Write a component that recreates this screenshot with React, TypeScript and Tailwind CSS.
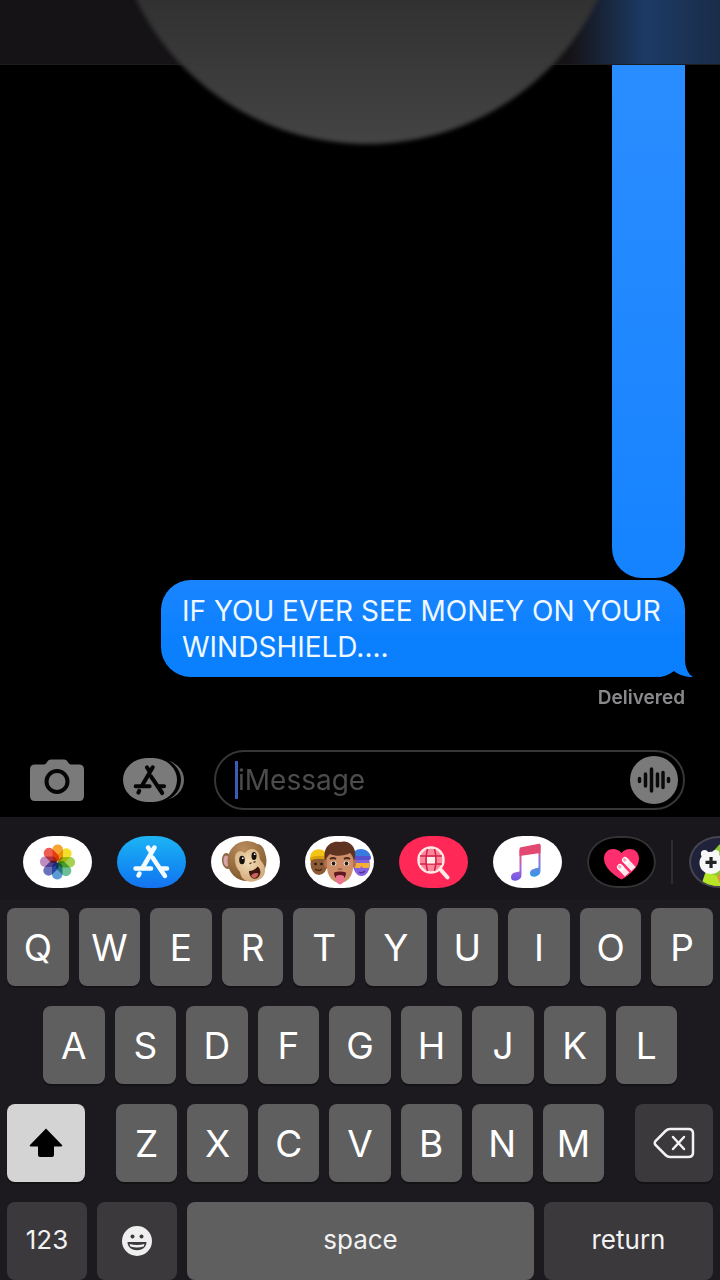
import type { ReactNode } from 'react';

interface DrawerApp {
  name: string;
  className: string;
  icon: ReactNode;
}

const petals = [
  { angle: 0, color: '#f79a1c' },
  { angle: 45, color: '#f2dc14' },
  { angle: 90, color: '#9ccb3b' },
  { angle: 135, color: '#5cb88a' },
  { angle: 180, color: '#4a8fd0' },
  { angle: 225, color: '#5b62b5' },
  { angle: 270, color: '#b680ba' },
  { angle: 315, color: '#ee4a3e' },
];

function PhotosIcon() {
  return (
    <svg viewBox="0 0 69 52" className="h-full w-full" aria-hidden="true">
      {petals.map((petal) => (
        <rect
          key={petal.angle}
          x="29.5"
          y="8.5"
          width="10.5"
          height="17"
          rx="5"
          fill={petal.color}
          className="mix-blend-multiply"
          opacity="0.9"
          transform={`rotate(${petal.angle} 34.5 26)`}
        />
      ))}
    </svg>
  );
}

function StoreGlyph({ color }: { color: string }) {
  return (
    <g fill="none" stroke={color} strokeWidth="4.500" strokeLinecap="round">
      <path d="M31 11.500 L34 16" />
      <path d="M37.500 11.500 L25.500 32" />
      <path d="M22.500 37.500 L21.500 39.500" />
      <path d="M35.500 21.500 L48 40" />
      <path d="M18.500 32.500 H34 M44.500 32.500 H50" />
    </g>
  );
}

function StoreIcon() {
  return (
    <svg viewBox="0 0 69 52" className="h-full w-full" aria-hidden="true">
      <StoreGlyph color="#f4fbff" />
    </svg>
  );
}

function MonkeyIcon() {
  return (
    <svg viewBox="0 0 69 52" className="h-full w-full" aria-hidden="true">
      <defs>
        <radialGradient id="fur" cx="0.4" cy="0.2" r="0.9">
          <stop offset="0" stopColor="#b98c5c" />
          <stop offset="1" stopColor="#7c5429" />
        </radialGradient>
        <radialGradient id="muzzle" cx="0.45" cy="0.4" r="0.65">
          <stop offset="0" stopColor="#f2dcb6" />
          <stop offset="1" stopColor="#d1a878" />
        </radialGradient>
      </defs>
      <ellipse cx="16" cy="25" rx="5" ry="8" fill="#8c6846" transform="rotate(-8 16 25)" />
      <ellipse cx="15.500" cy="25" rx="3" ry="5.500" fill="#d9a3a8" transform="rotate(-8 15.500 25)" />
      <ellipse cx="49" cy="16" rx="4.500" ry="8" fill="#8c6846" transform="rotate(-20 49 16)" />
      <ellipse cx="50" cy="16" rx="2" ry="5" fill="#c7b0b4" transform="rotate(-20 50 16)" />
      <ellipse cx="36" cy="25" rx="19.500" ry="20" fill="url(#fur)" />
      <path
        d="M24 24c-1-8 5-11 10-7 4-6 12-5 14 1 1 4 0 5 3 8 5 6 4 15-4 18-8 4-17 1-18-8-3-3-5-7-5-12z"
        fill="url(#muzzle)"
      />
      <ellipse cx="31" cy="24" rx="2.800" ry="4.200" fill="#17100c" />
      <ellipse cx="43" cy="20" rx="2.500" ry="4" fill="#17100c" />
      <circle cx="31.800" cy="22.200" r="0.900" fill="#fff" />
      <circle cx="43.700" cy="18.200" r="0.900" fill="#fff" />
      <path d="M39 27.500l1-.4M43 26.200l1-.4" stroke="#67452e" strokeWidth="1.500" strokeLinecap="round" />
      <path d="M38 35c4 0 7-2 8.500-4.500 3.500 2 4 8 .5 11-4 3-9 0-9-6.500z" fill="#3d150f" />
      <path d="M40 39.500c2-2.500 5-3 7.500-2-.5 4-5 7-7.500 2z" fill="#c9605c" />
    </svg>
  );
}

function MemojiIcon() {
  return (
    <svg viewBox="0 0 69 52" className="h-full w-full" aria-hidden="true">
      <ellipse cx="14" cy="28" rx="8.500" ry="11" fill="#8c5a35" />
      <path d="M5 23c0-13 17-13 18 0l-9-2z" fill="#f4c414" />
      <path d="M5 22c5-3 13-3 18 0v3c-5-3-13-3-18 0z" fill="#d99f0c" />
      <circle cx="10.500" cy="28" r="1.300" fill="#21140d" />
      <circle cx="16.500" cy="28" r="1.300" fill="#21140d" />
      <path d="M10 33q4 3 7 0" stroke="#4b2615" strokeWidth="1.500" fill="none" />
      <ellipse cx="56.500" cy="28" rx="8.500" ry="12" fill="#8263dc" />
      <path d="M48 22c-2-12 17-12 18 0l-9-2z" fill="#387bdf" />
      <rect x="48" y="20" width="18" height="4" rx="2" fill="#5a50ce" />
      <path d="M49 27h16l-1 5h-6l-1.500-2-1.500 2h-5z" fill="#f2ae35" />
      <path d="M54 36q3 2 6-1" stroke="#51359c" strokeWidth="1.500" fill="none" />
      <ellipse cx="21.500" cy="27" rx="2.500" ry="4.500" fill="#b3714f" />
      <ellipse cx="48.500" cy="27" rx="2.500" ry="4.500" fill="#b3714f" />
      <path d="M22 20c0-8 26-8 26 0v11c0 9-6 16-13 16s-13-7-13-16z" fill="#cf8d68" />
      <path d="M20 25C17 10 27 4 35 6c9-3 19 6 14 19-1-4-2-6-4-8-6 3-14 4-20 1-2 2-4 4-5 7z" fill="#5f3322" />
      <path d="M25 23q3-2 6 0M39 23q3-2 6 0" stroke="#4a291d" strokeWidth="2" fill="none" />
      <ellipse cx="28.500" cy="27.500" rx="2.800" ry="2.200" fill="#fff" />
      <ellipse cx="41.500" cy="27.500" rx="2.800" ry="2.200" fill="#fff" />
      <circle cx="28.500" cy="27.500" r="1.900" fill="#2b1a12" />
      <circle cx="41.500" cy="27.500" r="1.900" fill="#2b1a12" />
      <path d="M33 32.500q2 1.500 4 0" stroke="#9b5b40" strokeWidth="1.500" fill="none" />
      <path d="M29 36.500q6-2 12 0c0 5-3 7-6 7s-6-2-6-7z" fill="#5f1820" />
      <path d="M31 40q4-2 8 0v5q-4 7-8 0z" fill="#ea7593" />
    </svg>
  );
}

function SearchGlobeIcon() {
  return (
    <svg viewBox="0 0 69 52" className="h-full w-full" aria-hidden="true">
      <g fill="none" stroke="#ffe9e6">
        <circle cx="32" cy="24" r="12.500" fill="#ff8599" strokeWidth="2.500" />
        <path d="M41.500 33.500l7 8" strokeWidth="4" strokeLinecap="round" />
      </g>
      <g fill="none" stroke="#d0224a" strokeWidth="1.500">
        <path d="M21 20h22M21 28h22" />
        <path d="M28.500 13q-3 11 0 22M35.500 13q3 11 0 22" />
      </g>
      <path d="M28 21h8v6.500h-8z" fill="#fff0ee" />
    </svg>
  );
}

function MusicIcon() {
  return (
    <svg viewBox="0 0 69 52" className="h-full w-full" aria-hidden="true">
      <defs>
        <linearGradient id="stemLeft" x1="0" y1="0" x2="0" y2="1">
          <stop offset="0" stopColor="#f04a6c" />
          <stop offset="0.6" stopColor="#a66ad8" />
          <stop offset="1" stopColor="#6f55e6" />
        </linearGradient>
        <linearGradient id="stemRight" x1="0" y1="0" x2="0" y2="1">
          <stop offset="0" stopColor="#e5476e" />
          <stop offset="0.5" stopColor="#8f74d8" />
          <stop offset="1" stopColor="#2f9bea" />
        </linearGradient>
      </defs>
      <path d="M26.500 14h2V37q0 3-.5 4.500c-2 4-10 4.500-10 0C18 36 23 36.500 26.500 35.500z" fill="url(#stemLeft)" />
      <path d="M45.500 9h2V33q0 3-.5 4.500c-2 4-10 4.500-10 0 0-5 5-4.500 8.500-6z" fill="url(#stemRight)" />
      <path d="M26.500 13q0-1.500 1.500-1.700L46 7.700Q47.500 7.500 47.500 9v8L26.500 20z" fill="#e24870" />
    </svg>
  );
}

function DigitalTouchIcon() {
  return (
    <svg viewBox="0 0 69 52" className="h-full w-full" aria-hidden="true">
      <path
        d="M34.500 43.500C26 39 17 31 17 22.500 17 12 29 10 34.500 17 40 10 52 12 52 22.500 52 31 43 39 34.500 43.500z"
        fill="#ff2f6d"
      />
      <g fill="none" strokeLinecap="round">
        <path d="M38.500 24.500l8 8.500M33 31l7 7.500" stroke="#ffe6ea" strokeWidth="6" strokeLinecap="butt" />
        <path d="M38 24l1 1M33 31l1 1" stroke="#fff" strokeWidth="6" />
        <path d="M37.500 23.500l.5 .5M32.500 30.500l.5 .5" stroke="#f6a3b5" strokeWidth="3" />
      </g>
    </svg>
  );
}

function GameIcon() {
  return (
    <svg viewBox="0 0 69 52" className="h-full w-full" aria-hidden="true">
      <path d="M23 15L30 7h39v45H13z" fill="#8cc832" />
      <path d="M24 46l7-8 14-4v18H24z" fill="#e8923d" />
      <path d="M15 37l12 4 5 11H10z" fill="#b6e627" />
      <ellipse cx="21" cy="27" rx="12.500" ry="12" fill="#f7f7f7" />
      <circle cx="14" cy="17" r="4" fill="#f7f7f7" />
      <circle cx="26" cy="17" r="4" fill="#f7f7f7" />
      <path d="M21 20.500v12M15 26.500h12" stroke="#222" strokeWidth="3.500" />
    </svg>
  );
}

const drawerApps: DrawerApp[] = [
  { name: 'Photos', className: 'bg-white', icon: <PhotosIcon /> },
  { name: 'App Store', className: 'bg-linear-to-b from-[#1fb4f5] to-[#1672f0]', icon: <StoreIcon /> },
  { name: 'Animoji', className: 'bg-white', icon: <MonkeyIcon /> },
  { name: 'Memoji', className: 'bg-white', icon: <MemojiIcon /> },
  { name: 'Images', className: 'bg-[#ff2856]', icon: <SearchGlobeIcon /> },
  { name: 'Music', className: 'bg-white', icon: <MusicIcon /> },
  { name: 'Digital Touch', className: 'bg-black ring-2 ring-[#333235] ring-inset', icon: <DigitalTouchIcon /> },
];

const topRow = ['Q', 'W', 'E', 'R', 'T', 'Y', 'U', 'I', 'O', 'P'];
const middleRow = ['A', 'S', 'D', 'F', 'G', 'H', 'J', 'K', 'L'];
const bottomRow = ['Z', 'X', 'C', 'V', 'B', 'N', 'M'];

function LetterKey({ letter }: { letter: string }) {
  return (
    <button
      type="button"
      className="h-[78px] min-w-0 flex-1 rounded-lg bg-[#5f5f60] pt-0.5 text-[37px] text-white shadow-[0_2px_0_#131215]"
    >
      {letter}
    </button>
  );
}

function Composer() {
  return (
    <form className="flex items-center pr-[35px] pb-[7px] pl-[30px]">
      <button type="button" aria-label="Camera" className="mr-[39px] shrink-0">
        <svg viewBox="0 0 54 43" className="h-[43px] w-[54px]" aria-hidden="true">
          <path
            d="M5 5.500h9c3 0 3-5 7-5h13c4 0 4 5 7 5h8q5 0 5 5V37q0 5-5 5H5q-5 0-5-5V10.500q0-5 5-5z"
            fill="#7a7a7b"
          />
          <circle cx="27" cy="22.500" r="10.500" fill="none" stroke="#050505" strokeWidth="4" />
        </svg>
      </button>
      <button type="button" aria-label="Apps" className="mr-[29px] shrink-0">
        <svg viewBox="0 0 62 44" className="h-11 w-[62px]" aria-hidden="true">
          <rect x="7" y="2" width="54" height="40" rx="22" ry="20" fill="#6c6c6d" />
          <rect x="3" y="0" width="55" height="44" rx="24" ry="22" fill="#000" />
          <rect x="0" y="0" width="54" height="44" rx="24" ry="22" fill="#7a7a7b" />
          <g transform="translate(-4 -1) scale(0.9)">
            <StoreGlyph color="#050505" />
          </g>
        </svg>
      </button>
      <div className="relative flex h-[60px] min-w-0 flex-1 items-center rounded-full border-2 border-[#363637] pr-[5px] pl-[22px]">
        <span className="absolute left-[19px] h-[38px] w-[3px] bg-[#3c5bb8]" />
        <input
          type="text"
          aria-label="Message"
          placeholder="iMessage"
          className="h-10 min-w-0 flex-1 bg-transparent text-[28px] text-white outline-none placeholder:text-[#4c4c4e]"
        />
        <button type="button" aria-label="Record audio" className="shrink-0">
          <svg viewBox="0 0 48 48" className="size-12" aria-hidden="true">
            <circle cx="24" cy="24" r="24" fill="#7a7a7b" />
            <path
              d="M9.500 22.500v3M15.500 18v12M21.500 13v22M27.500 18v12M33 16.500v15M38.500 22.500v3"
              stroke="#0a0a0a"
              strokeWidth="3.500"
              strokeLinecap="round"
            />
          </svg>
        </button>
      </div>
    </form>
  );
}

function AppDrawer() {
  return (
    <nav
      aria-label="iMessage apps"
      className="flex items-center gap-[25px] overflow-hidden bg-[#19171b] pt-[19px] pb-3 pl-[23px]"
    >
      {drawerApps.map((app) => (
        <button
          key={app.name}
          type="button"
          aria-label={app.name}
          className={`h-[52px] w-[69px] shrink-0 overflow-hidden rounded-[30px/26px] ${app.className}`}
        >
          {app.icon}
        </button>
      ))}
      <div className="-ml-2.5 flex shrink-0 items-center gap-4">
        <span className="h-11 w-0.5 bg-[#2e2c30]" />
        <button
          type="button"
          aria-label="Games"
          className="h-[52px] w-[69px] overflow-hidden rounded-[30px/26px] border-2 border-[#45454f] bg-[#20223c]"
        >
          <GameIcon />
        </button>
      </div>
    </nav>
  );
}

function Keyboard() {
  return (
    <section aria-label="Keyboard" className="flex flex-col gap-5 bg-[#1c1a1e] px-[7px] pt-2">
      <div className="flex gap-2.5">
        {topRow.map((letter) => (
          <LetterKey key={letter} letter={letter} />
        ))}
      </div>
      <div className="flex gap-2.5 px-9">
        {middleRow.map((letter) => (
          <LetterKey key={letter} letter={letter} />
        ))}
      </div>
      <div className="flex gap-[31px]">
        <button
          type="button"
          aria-label="Shift"
          className="flex h-[78px] w-[78px] shrink-0 items-center justify-center rounded-lg bg-[#d4d4d4] shadow-[0_2px_0_#131215]"
        >
          <svg viewBox="0 0 34 30" className="h-[30px] w-[34px]" aria-hidden="true">
            <path d="M17 0.500L33 17q1 1.500-1 1.500H25V27q0 2-2 2H11q-2 0-2-2V18.500H2q-2 0-1-1.500z" fill="#000" />
          </svg>
        </button>
        <div className="flex min-w-0 flex-1 gap-2.5">
          {bottomRow.map((letter) => (
            <LetterKey key={letter} letter={letter} />
          ))}
        </div>
        <button
          type="button"
          aria-label="Delete"
          className="flex h-[78px] w-[78px] shrink-0 items-center justify-center rounded-lg bg-[#3b393c] shadow-[0_2px_0_#131215]"
        >
          <svg viewBox="0 0 42 32" className="h-8 w-[42px]" fill="none" stroke="#f2f2f2" aria-hidden="true">
            <path
              d="M17 2H35.500Q40 2 40 6.500V25.500Q40 30 35.500 30H17Q14.500 30 12.500 28L2.500 18Q1 16 2.500 14L12.500 4Q14.500 2 17 2z"
              strokeWidth="2.500"
            />
            <path d="M20 10l11 12M31 10l-11 12" strokeWidth="2.500" strokeLinecap="round" />
          </svg>
        </button>
      </div>
      <div className="flex gap-2.5 text-[26px] text-[#f2f2f2]">
        <button type="button" className="h-[78px] w-20 shrink-0 rounded-lg bg-[#3b393c] pb-1">
          123
        </button>
        <button
          type="button"
          aria-label="Emoji"
          className="flex h-[78px] w-20 shrink-0 items-center justify-center rounded-lg bg-[#3b393c]"
        >
          <svg viewBox="0 0 30 30" className="size-[30px]" aria-hidden="true">
            <circle cx="15" cy="15" r="15" fill="#f0eff0" />
            <circle cx="10.500" cy="10.500" r="2" fill="#3b393c" />
            <circle cx="19.500" cy="10.500" r="2" fill="#3b393c" />
            <path d="M5.500 16h19c0 11-19 11-19 0z" fill="#3b393c" />
            <path d="M7.500 18q7.500 2 15 0l-.8 2.500q-6.700 2-13.400 0z" fill="#f0eff0" />
          </svg>
        </button>
        <button type="button" className="h-[78px] min-w-0 flex-1 rounded-lg bg-[#5f5f60] pb-1">
          space
        </button>
        <button type="button" className="h-[78px] w-[169px] shrink-0 rounded-lg bg-[#3b393c] pb-1">
          return
        </button>
      </div>
    </section>
  );
}

export default function App() {
  return (
    <div className="relative flex min-h-screen flex-col overflow-hidden bg-black font-[Inter,sans-serif]">
      <header className="flex h-[65px] justify-end border-b border-[#1c1b1e] bg-[#151316]">
        <div className="w-[150px] bg-linear-to-r from-transparent via-[#1c3b66] via-50% to-[#1a2c48]" />
      </header>

      {/* Round preview hanging over the top of the conversation */}
      <div className="absolute -top-[370px] left-[51%] size-[514px] -translate-x-1/2 rounded-full bg-linear-to-b from-[#303030] from-70% to-[#444444] blur-[2px]" />

      <main className="flex flex-1 flex-col items-end pr-[35px] pb-10">
        <div className="w-[73px] flex-1 rounded-b-[30px] bg-linear-to-b from-[#2a8dff] to-[#1583ff]" />
        <div className="relative mt-0.5 max-w-[524px] rounded-[30px] bg-linear-to-b from-[#1a85ff] to-[#0a80ff] to-60% px-[21px] pt-[13px] pb-3">
          <p className="text-[28px] leading-9 text-[#f0f8ff]">IF YOU EVER SEE MONEY ON YOUR WINDSHIELD....</p>
          <svg viewBox="0 0 36 32" className="absolute right-[-8px] bottom-0 h-8 w-9" aria-hidden="true">
            <path d="M28 2V14C28 23 31 29 36 32C29 32 22 30 17 26C12 30 6 32 0 32L6 12z" fill="#0a80ff" />
          </svg>
        </div>
        <p className="mt-[9px] text-[19px] leading-6 font-semibold text-[#89898c]">Delivered</p>
      </main>

      <Composer />
      <AppDrawer />
      <Keyboard />
    </div>
  );
}
